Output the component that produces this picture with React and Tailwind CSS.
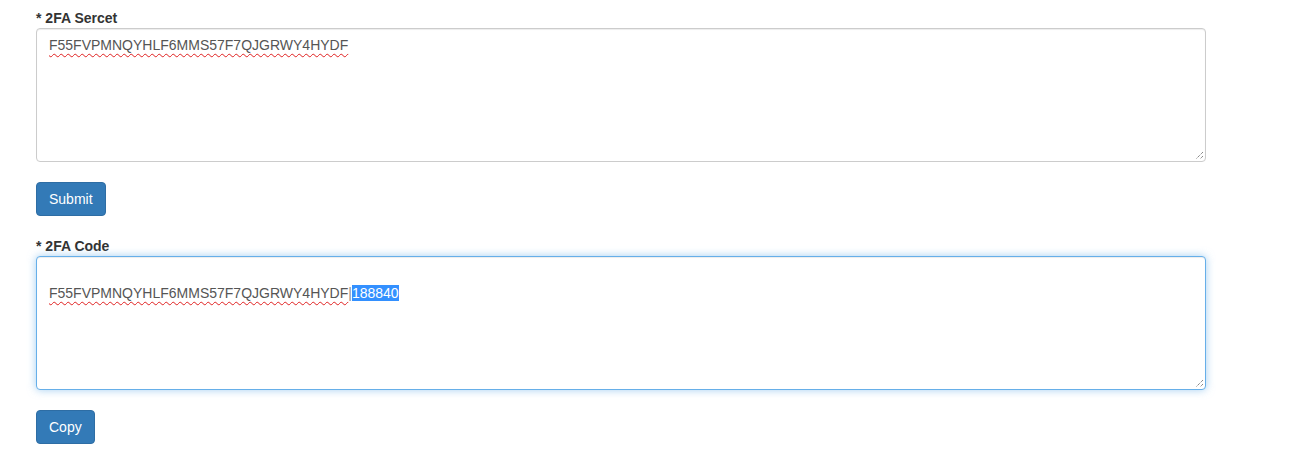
import React from "react";

function Grip() {
  return (
    <svg
      className="absolute right-[1px] bottom-[1px]"
      width="9"
      height="9"
      viewBox="0 0 9 9"
    >
      <path d="M8 1 L1 8" stroke="#555" strokeWidth="1" strokeDasharray="1 1" />
      <path d="M8 5 L5 8" stroke="#555" strokeWidth="1" strokeDasharray="1 1" />
    </svg>
  );
}

function Field({ label, focused, children }) {
  return (
    <div className="flex flex-col">
      <label className="h-5 leading-5 font-bold text-[#333] text-[14px]">* {label}</label>
      <div
        className={
          "relative w-[1170px] h-[134px] rounded-[4px] border bg-white px-3 py-[6px] text-[14px] leading-5 text-[#555] " +
          (focused
            ? "border-[#66afe9] shadow-[inset_0_1px_1px_rgba(0,0,0,0.075),0_0_8px_rgba(102,175,233,0.6)]"
            : "border-[#ccc] shadow-[inset_0_1px_1px_rgba(0,0,0,0.075)]")
        }
      >
        {children}
        <Grip />
      </div>
    </div>
  );
}

function Btn({ children }) {
  return (
    <button className="self-start h-[34px] px-3 rounded-[4px] border border-[#2e6da4] bg-[#337ab7] text-white text-[14px] leading-5">
      {children}
    </button>
  );
}

export default function App() {
  const secret = "F55FVPMNQYHLF6MMS57F7QJGRWY4HYDF";
  const wavy = "underline decoration-wavy decoration-[#e02020] decoration-1 underline-offset-[3px]";
  return (
    <div
      className="bg-white w-[1290px] h-[469px] pl-9 pt-2 flex flex-col"
      style={{ fontFamily: '"Liberation Sans", Arial, sans-serif' }}
    >
      <Field label="2FA Sercet">
        <div className="h-5">
          <span className={wavy}>{secret}</span>
        </div>
      </Field>
      <div className="mt-5">
        <Btn>Submit</Btn>
      </div>
      <div className="mt-5">
        <Field label="2FA Code" focused>
          <div className="h-5"></div>
          <div className="h-5">
            <span className={wavy}>{secret}</span>
            <span className="text-[#888]">|</span>
            <span className="bg-[#3390ff] text-white">188840</span>
          </div>
        </Field>
      </div>
      <div className="mt-5">
        <Btn>Copy</Btn>
      </div>
    </div>
  );
}
